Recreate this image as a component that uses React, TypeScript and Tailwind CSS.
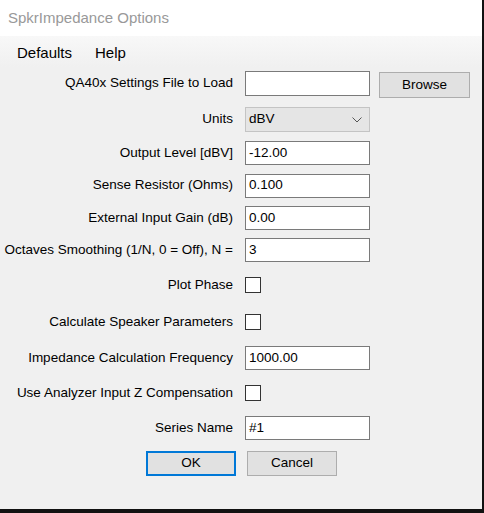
import { ReactNode } from "react";

function Row({ label, mt, h, children }: { label: string; mt: string; h: string; children: ReactNode }) {
  return (
    <div className={`flex items-center ${mt} ${h}`}>
      <div className="w-[233px] text-right whitespace-nowrap">{label}</div>
      <div className="ml-[12px] flex items-center">{children}</div>
    </div>
  );
}

function TextBox({ value = "" }: { value?: string }) {
  return (
    <div className="w-[125px] h-[24px] bg-white border border-[#7a7a7a] pl-[3px] flex items-center">
      {value}
    </div>
  );
}

function CheckBox() {
  return <div className="w-[16px] h-[16px] bg-white border border-[#333]" />;
}

export default function App() {
  return (
    <div
      className="w-[484px] h-[513px] bg-[#f0f0f0] border-r-2 border-b-4 border-[#111] text-[13.5px] text-black flex flex-col"
      style={{ fontFamily: '"Liberation Sans", Arial, sans-serif' }}
    >
      <div className="h-[36px] bg-white flex items-center pl-[8px] text-[15px] text-[#999]">
        SpkrImpedance Options
      </div>
      <div className="h-[31px] bg-gradient-to-b from-[#f8f8f8] to-[#f0f0f0] flex items-center pt-[3px] text-[15px]">
        <span className="ml-[17px]">Defaults</span>
        <span className="ml-[23px]">Help</span>
      </div>

      <div className="flex flex-col">
        <div className="flex items-start mt-[4px] h-[27px]">
          <div className="w-[233px] text-right h-[25px] flex items-center justify-end">QA40x Settings File to Load</div>
          <div className="ml-[12px]">
            <div className="w-[125px] h-[25px] bg-white border border-[#7a7a7a]" />
          </div>
          <div className="ml-[9px] mt-[1px] w-[91px] h-[26px] bg-[#e1e1e1] border border-[#adadad] flex items-center justify-center">
            Browse
          </div>
        </div>

        <Row label="Units" mt="mt-[9px]" h="h-[25px]">
          <div className="w-[125px] h-[25px] bg-[#e5e5e5] border border-[#c4c4c4] pl-[3px] flex items-center justify-between">
            dBV
            <svg width="10" height="6" viewBox="0 0 10 6" className="mr-[7px]">
              <path d="M0.5 0.5 L5 5 L9.5 0.5" fill="none" stroke="#555" strokeWidth="1" />
            </svg>
          </div>
        </Row>
        <Row label="Output Level [dBV]" mt="mt-[9px]" h="h-[24px]">
          <TextBox value="-12.00" />
        </Row>
        <Row label="Sense Resistor (Ohms)" mt="mt-[8px]" h="h-[25px]">
          <TextBox value="0.100" />
        </Row>
        <Row label="External Input Gain (dB)" mt="mt-[8px]" h="h-[24px]">
          <TextBox value="0.00" />
        </Row>
        <Row label="Octaves Smoothing (1/N, 0 = Off), N =" mt="mt-[8px]" h="h-[24px]">
          <TextBox value="3" />
        </Row>
        <Row label="Plot Phase" mt="mt-[15px]" h="h-[16px]">
          <CheckBox />
        </Row>
        <Row label="Calculate Speaker Parameters" mt="mt-[21px]" h="h-[16px]">
          <CheckBox />
        </Row>
        <Row label="Impedance Calculation Frequency" mt="mt-[16px]" h="h-[24px]">
          <TextBox value="1000.00" />
        </Row>
        <Row label="Use Analyzer Input Z Compensation" mt="mt-[15px]" h="h-[16px]">
          <CheckBox />
        </Row>
        <Row label="Series Name" mt="mt-[15px]" h="h-[24px]">
          <TextBox value="#1" />
        </Row>

        <div className="flex mt-[11px] h-[25px]">
          <div className="ml-[146px] w-[90px] h-[25px] bg-[#e1e1e1] border-2 border-[#0078d7] flex items-center justify-center">
            OK
          </div>
          <div className="ml-[11px] w-[90px] h-[25px] bg-[#e1e1e1] border border-[#adadad] flex items-center justify-center">
            Cancel
          </div>
        </div>
      </div>
    </div>
  );
}
